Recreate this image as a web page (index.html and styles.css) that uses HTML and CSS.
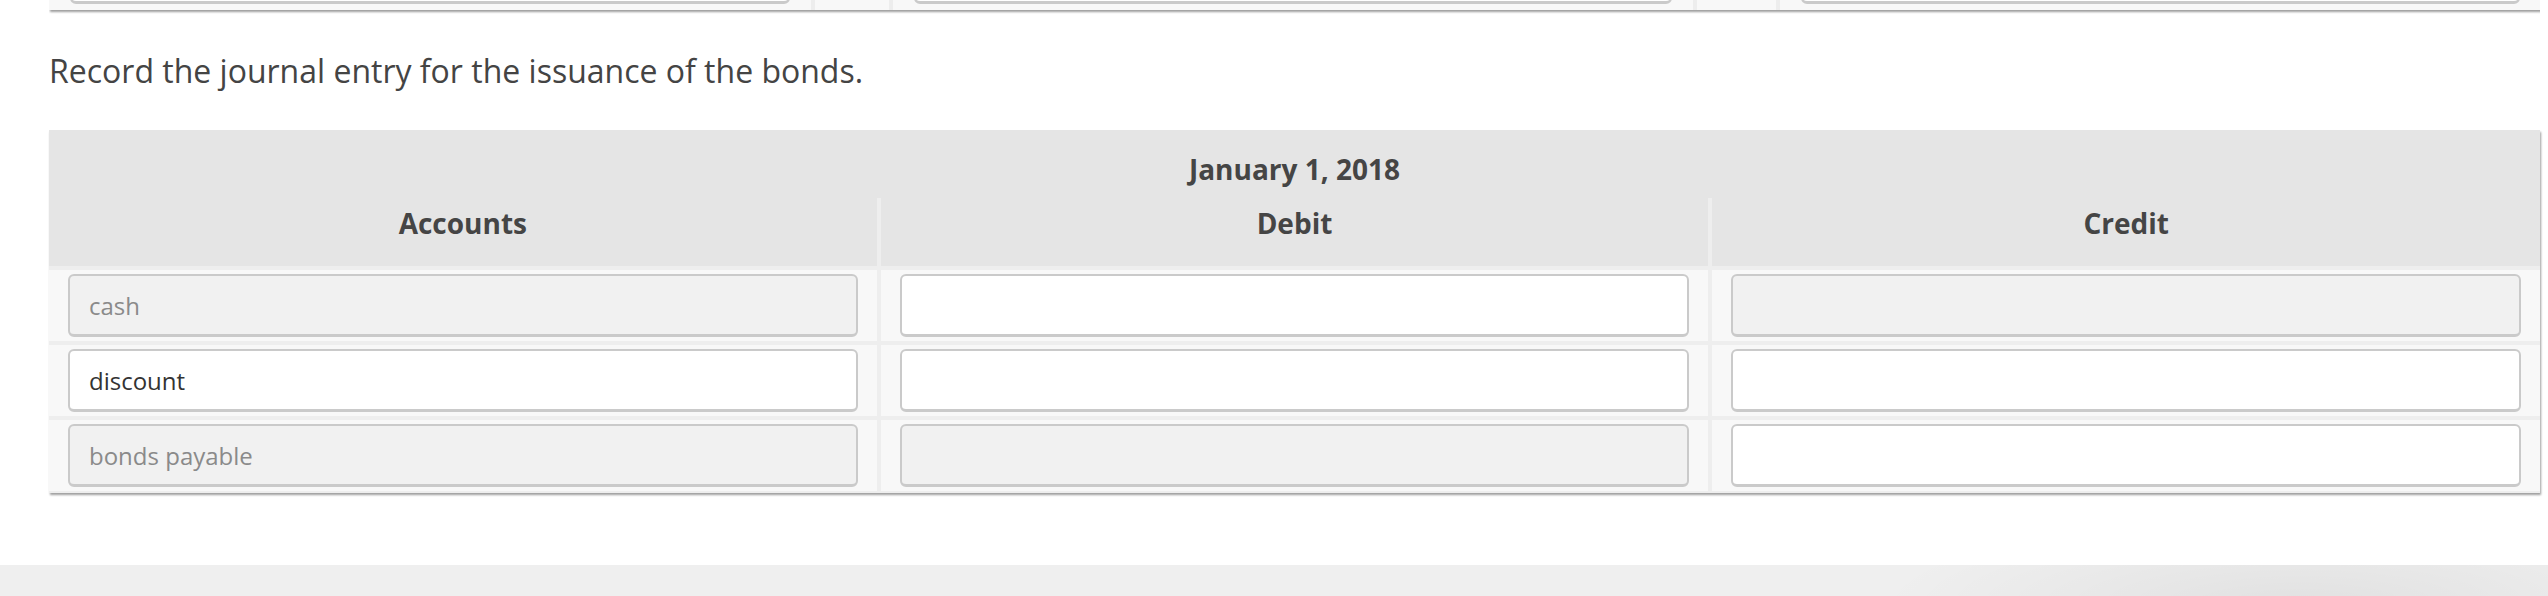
FILE: index.html
```html
<!DOCTYPE html>
<html lang="en">
<head>
<meta charset="utf-8">
<title>Journal entry</title>
<link rel="stylesheet" href="styles.css">
</head>
<body>
<div class="page">
  <div class="prev-clip">
    <div class="prev-table">
      <div class="prev-cell"><div class="field"></div></div>
      <div class="prev-cell"></div>
      <div class="prev-cell"><div class="field"></div></div>
      <div class="prev-cell"></div>
      <div class="prev-cell"><div class="field"></div></div>
    </div>
  </div>

  <p class="prompt">Record the journal entry for the issuance of the bonds.</p>

  <div class="journal">
    <div class="head-date">January 1, 2018</div>
    <div class="head-cols">
      <div class="head-cell">Accounts</div>
      <div class="head-cell">Debit</div>
      <div class="head-cell">Credit</div>
    </div>
    <div class="body-grid">
      <div class="cell"><div class="field locked muted">cash</div></div>
      <div class="cell"><div class="field"></div></div>
      <div class="cell"><div class="field locked"></div></div>

      <div class="cell"><div class="field">discount</div></div>
      <div class="cell"><div class="field"></div></div>
      <div class="cell"><div class="field"></div></div>

      <div class="cell"><div class="field locked muted">bonds payable</div></div>
      <div class="cell"><div class="field locked"></div></div>
      <div class="cell"><div class="field"></div></div>
    </div>
  </div>
</div>
<div class="footer-band"></div>
</body>
</html>
```
FILE: styles.css
```css
html, body {
  margin: 0;
  padding: 0;
  background: #ffffff;
  font-family: "Open Sans", "Liberation Sans", sans-serif;
  color: #3f3f3f;
}

.page {
  padding: 0 8px 0 49px;
  height: 565px;
  box-sizing: border-box;
}

/* bottom of the previous table, mostly scrolled out of view */
.prev-clip {
  height: 14px;
  overflow: hidden;
  display: flex;
  align-items: flex-end;
}

.prev-table {
  width: 2492px;
  display: grid;
  grid-template-columns: 762px 74px 800px 79px 761px;
  column-gap: 4px;
  background: #ededed;
  box-shadow: 1px 2px 2px rgba(0, 0, 0, 0.38);
  margin-bottom: 4px;
}

.prev-cell {
  background: #f8f8f8;
  padding: 4px 21px 6px 21px;
  height: 63px;
}

.prev-cell .field {
  height: 63px;
  box-sizing: border-box;
}

.prompt {
  margin: 35px 0 0 0;
  font-size: 32px;
  line-height: 44px;
  font-weight: 400;
  color: #444444;
}

.journal {
  margin-top: 37px;
  width: 2491px;
  background: #e5e5e5;
  box-shadow: 1px 2px 2px rgba(0, 0, 0, 0.38);
}

.head-date {
  text-align: center;
  font-size: 28px;
  line-height: 38px;
  font-weight: 700;
  color: #454545;
  padding: 20px 0 10px 0;
}

.head-cols {
  display: grid;
  grid-template-columns: 1fr 1fr 1fr;
  column-gap: 4px;
  background: #eeeeee;
}

.head-cell {
  background: #e5e5e5;
  text-align: center;
  font-size: 28px;
  line-height: 38px;
  font-weight: 700;
  color: #454545;
  padding: 6px 0 24px 0;
}

.body-grid {
  display: grid;
  grid-template-columns: 1fr 1fr 1fr;
  gap: 4px;
  padding: 4px 0 2px 0;
  background: #eeeeee;
}

.cell {
  background: #f8f8f8;
  padding: 4px 19px 4px 19px;
}

.field {
  height: 63px;
  box-sizing: border-box;
  background: #ffffff;
  border: 2px solid #cacaca;
  border-bottom-width: 3px;
  border-radius: 6px;
  padding: 0 19px;
  display: flex;
  align-items: center;
  font-size: 24px;
  color: #333333;
}

.field.locked {
  background: #f1f1f1;
}

.field.muted {
  color: #8a8a8a;
}

.footer-band {
  height: 31px;
  background:
    radial-gradient(ellipse 420px 90px at 2300px 40px, rgba(0, 0, 0, 0.06), rgba(0, 0, 0, 0) 100%),
    #efefef;
}
```
